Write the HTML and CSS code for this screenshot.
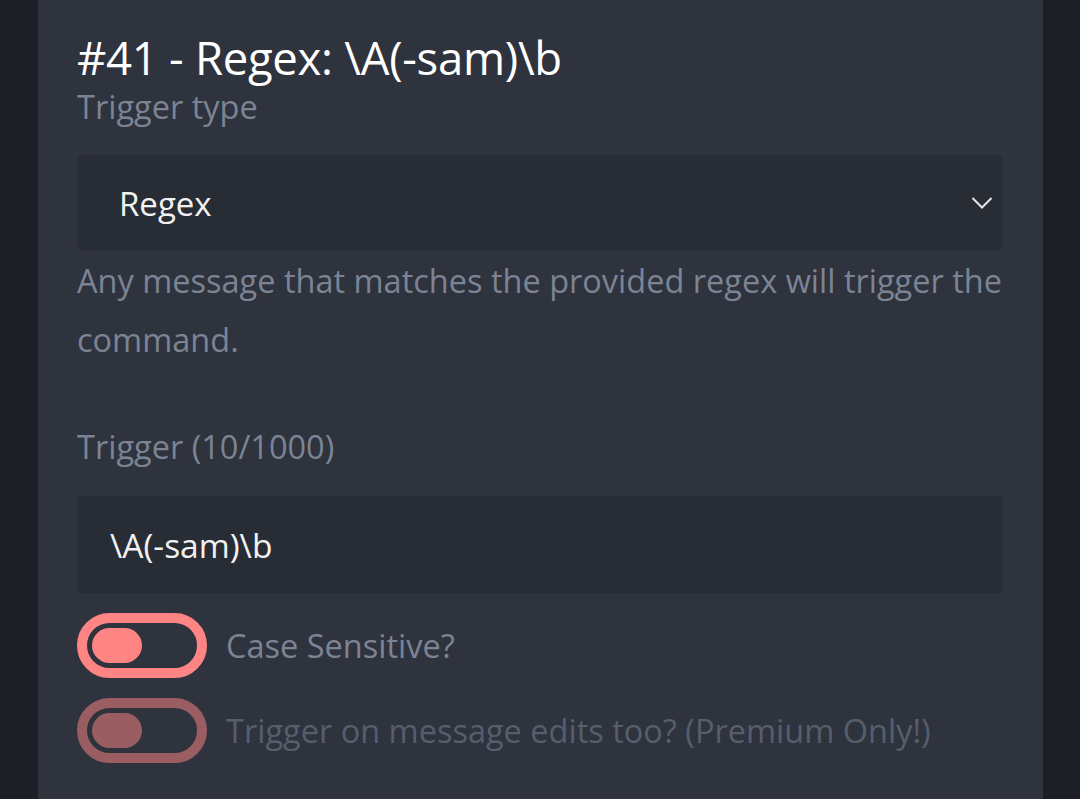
FILE: index.html
```html
<!DOCTYPE html>
<html>
<head>
<meta charset="utf-8">
<link rel="stylesheet" href="styles.css">
</head>
<body>
<div class="page">
  <div class="panel">
    <h1 class="title">#41 - Regex: \A(-sam)\b</h1>
    <div class="label">Trigger type</div>
    <div class="select">
      <span class="select-value">Regex</span>
      <svg class="chevron" width="22" height="14" viewBox="0 0 22 14"><path d="M1.5 2 L11 11.5 L20.5 2" fill="none" stroke="#e6e6e6" stroke-width="2"/></svg>
    </div>
    <p class="desc">Any message that matches the provided regex will trigger the command.</p>
    <div class="label label-trigger">Trigger (10/1000)</div>
    <div class="input">\A(-sam)\b</div>
    <div class="toggle-row">
      <span class="toggle"><span class="knob"></span></span>
      <span class="toggle-text">Case Sensitive?</span>
    </div>
    <div class="toggle-row disabled">
      <span class="toggle"><span class="knob"></span></span>
      <span class="toggle-text">Trigger on message edits too? (Premium Only!)</span>
    </div>
  </div>
</div>
</body>
</html>
```
FILE: styles.css
```css
html, body {
  margin: 0;
  padding: 0;
  background: #1c1f25;
  height: 100%;
  overflow: hidden;
}
.page {
  display: flex;
  padding-left: 38px;
  height: 799px;
}
.panel {
  width: 1005px;
  box-sizing: border-box;
  background: #2e333e;
  padding: 27px 40px 0 39px;
  font-family: "Open Sans", "DejaVu Sans", sans-serif;
}
.title {
  margin: 0;
  color: #ffffff;
  font-size: 45.5px;
  font-weight: 500;
  letter-spacing: -0.3px;
  line-height: 60px;
}
.label {
  color: #7c8494;
  font-size: 32.5px;
  line-height: 40px;
}
.select {
  margin-top: 28px;
  height: 96px;
  background: #282c35;
  border-radius: 8px;
  display: flex;
  align-items: center;
  justify-content: space-between;
  padding: 0 10px 0 42px;
  box-sizing: border-box;
}
.select-value {
  color: #f2f2f2;
  font-size: 33px;
}
.desc {
  margin: 0;
  color: #7c8494;
  font-size: 32.5px;
  line-height: 59px;
}
.label-trigger {
  margin-top: 58px;
}
.input {
  margin-top: 29px;
  height: 97px;
  background: #282c35;
  border-radius: 4px;
  display: flex;
  align-items: center;
  padding-left: 33px;
  color: #f2f2f2;
  font-size: 33.5px;
}
.toggle-row {
  display: flex;
  align-items: center;
  gap: 19px;
  margin-top: 20px;
}
.toggle {
  width: 130px;
  height: 65px;
  box-sizing: border-box;
  border: 10px solid #ff8585;
  border-radius: 33px;
  padding: 5px;
  display: flex;
}
.knob {
  width: 50px;
  height: 35px;
  border-radius: 18px;
  background: #ff8585;
}
.toggle-text {
  color: #7c8494;
  font-size: 32.5px;
}
.disabled .toggle {
  border-color: #9a5e62;
}
.disabled .knob {
  background: #9a5e62;
}
.disabled .toggle-text {
  color: #575e6b;
}
```
